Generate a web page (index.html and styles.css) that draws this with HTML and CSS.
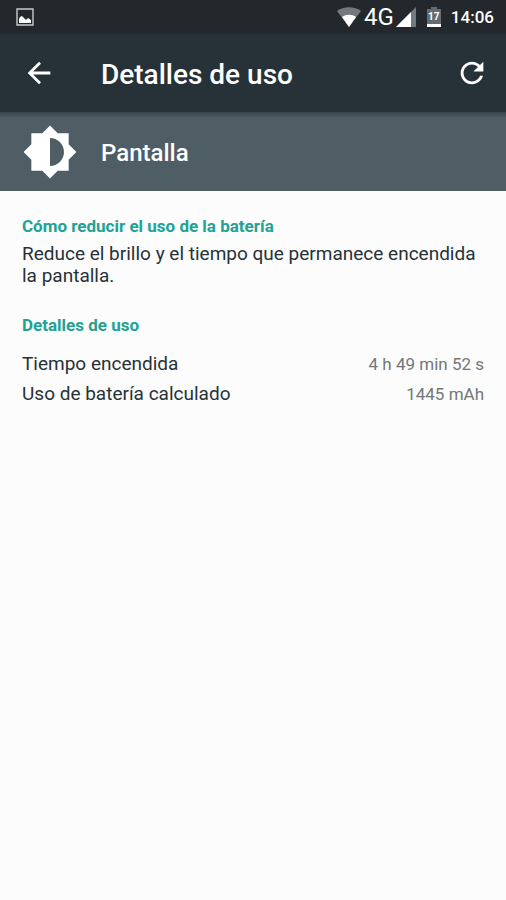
FILE: index.html
```html
<!DOCTYPE html>
<html lang="es">
<head>
<meta charset="utf-8">
<meta name="viewport" content="width=device-width, initial-scale=1">
<title>Detalles de uso</title>
<link rel="stylesheet" href="styles.css">
</head>
<body>
<div class="status-bar">
  <svg class="status-picture" viewBox="0 0 18 18" aria-hidden="true">
    <path d="M1 1H17V17H1Z" fill="none" stroke="#c3cccd" stroke-width="1.4"/>
    <path d="M3 15V11L4 9L6 8L8 10L10 12L12 10L15 12V15Z" fill="#fff"/>
  </svg>
  <div class="status-icons">
    <svg class="wifi" viewBox="0 0 24 20" aria-hidden="true">
      <path d="M0 4C7-1 17-1 24 4L12 20Z" fill="#727a7d"/>
      <path d="M5 10C9 7 15 7 19 10L12 20Z" fill="#fff"/>
    </svg>
    <span class="network">4G</span>
    <svg class="signal" viewBox="0 0 20 20" aria-hidden="true">
      <path d="M0 20L20 0V20Z" fill="#727a7d"/>
      <path d="M0 20L15 5V20Z" fill="#fff"/>
    </svg>
    <span class="battery">
      <svg class="battery-shape" viewBox="0 0 14 20" aria-hidden="true">
        <path d="M0 2H4V0H10V2H14V20H0Z" fill="#646c6f"/>
        <path d="M0 17H14V20H0Z" fill="#fff"/>
      </svg>
      <span class="battery-level">17</span>
    </span>
    <span class="clock">14:06</span>
  </div>
</div>
<header class="app-bar">
  <button class="icon-button" type="button" aria-label="Atrás">
    <svg class="action-icon" viewBox="0 0 24 24" aria-hidden="true"><path d="M20 11H7.83l5.59-5.59L12 4l-8 8 8 8 1.41-1.41L7.83 13H20v-2z" fill="#fff"/></svg>
  </button>
  <h1 class="title">Detalles de uso</h1>
  <button class="icon-button" type="button" aria-label="Actualizar">
    <svg class="action-icon" viewBox="0 0 24 24" aria-hidden="true"><path d="M17.65 6.35C16.2 4.9 14.21 4 12 4c-4.42 0-7.99 3.58-7.99 8s3.57 8 7.99 8c3.73 0 6.84-2.55 7.73-6h-2.08c-.82 2.33-3.04 4-5.65 4-3.31 0-6-2.69-6-6s2.69-6 6-6c1.66 0 3.14.69 4.22 1.78L13 11h7V4l-2.35 2.35z" fill="#fff"/></svg>
  </button>
</header>
<div class="entity">
  <svg class="entity-icon" viewBox="0 0 24 24" aria-hidden="true"><path d="M20 15.31L23.31 12 20 8.69V4h-4.69L12 .69 8.69 4H4v4.69L.69 12 4 15.31V20h4.69L12 23.31 15.31 20H20v-4.69zM12 18V6c3.31 0 6 2.69 6 6s-2.69 6-6 6z" fill="#fff"/></svg>
  <h2 class="entity-name">Pantalla</h2>
</div>
<main class="content">
  <section class="section">
    <h3 class="heading">Cómo reducir el uso de la batería</h3>
    <p class="advice">Reduce el brillo y el tiempo que permanece encendida la pantalla.</p>
  </section>
  <section class="section">
    <h3 class="heading">Detalles de uso</h3>
    <dl class="stats">
      <div class="stat"><dt>Tiempo encendida</dt><dd>4 h 49 min 52 s</dd></div>
      <div class="stat"><dt>Uso de batería calculado</dt><dd>1445 mAh</dd></div>
    </dl>
  </section>
</main>
</body>
</html>
```
FILE: styles.css
```css
* {
  box-sizing: border-box;
}

body,
h1,
h2,
h3,
p,
dl,
dd {
  margin: 0;
}

body {
  min-height: 100vh;
  background: #fcfcfc;
  color: #263238;
  font-family: Roboto, "Liberation Sans", sans-serif;
}

svg {
  display: block;
  flex: none;
}

.status-bar {
  display: flex;
  align-items: center;
  justify-content: space-between;
  height: 34px;
  padding: 0 12px 0 16px;
  background: #22282b;
  color: #fff;
}

.status-picture {
  width: 18px;
  height: 18px;
}

.status-icons {
  display: flex;
  align-items: center;
}

.wifi {
  width: 24px;
  height: 20px;
}

.network {
  margin: 0 2px 0 3px;
  font-size: 24px;
  line-height: 34px;
}

.signal {
  width: 20px;
  height: 20px;
}

.battery {
  position: relative;
  margin: 0 10px 0 11px;
}

.battery-shape {
  width: 14px;
  height: 20px;
}

.battery-level {
  position: absolute;
  inset: 0;
  font-size: 10px;
  font-weight: 700;
  line-height: 20px;
  text-align: center;
}

.clock {
  font-size: 17px;
  font-weight: 500;
}

.app-bar {
  display: flex;
  align-items: center;
  height: 78px;
  padding: 0 17px 0 22px;
  background: #263238;
  color: #fff;
}

.icon-button {
  padding: 0;
  border: 0;
  background: none;
}

.action-icon {
  width: 34px;
  height: 34px;
}

.title {
  flex: 1;
  padding: 2px 0 0 45px;
  font-size: 28px;
  font-weight: 500;
}

.entity {
  display: flex;
  align-items: center;
  gap: 23px;
  height: 79px;
  padding: 0 22px;
  background: linear-gradient(#38454b, #4f5d64 6px);
  color: #fff;
}

.entity-icon {
  width: 56px;
  height: 56px;
}

.entity-name {
  padding-top: 2px;
  font-size: 24px;
  font-weight: 500;
}

.content {
  padding: 23px 22px;
}

.section + .section {
  margin-top: 26px;
}

.heading {
  color: #21a295;
  font-size: 17px;
  font-weight: 700;
  line-height: 24px;
}

.advice {
  margin-top: 5px;
  font-size: 19px;
  line-height: 22px;
}

.stats {
  margin-top: 12px;
}

.stat {
  display: flex;
  align-items: baseline;
  justify-content: space-between;
  line-height: 29px;
}

.stat dt {
  font-size: 19px;
}

.stat dd {
  color: #737779;
  font-size: 17px;
}
```
